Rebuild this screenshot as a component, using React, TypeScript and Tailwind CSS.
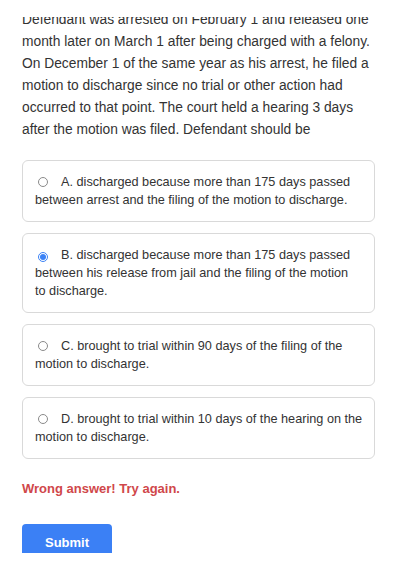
import { useState } from "react";

const options = [
	{ key: "A", lines: ["discharged because more than 175 days passed", "between arrest and the filing of the motion to discharge."] },
	{
		key: "B",
		lines: [
			"discharged because more than 175 days passed",
			"between his release from jail and the filing of the motion",
			"to discharge.",
		],
	},
	{ key: "C", lines: ["brought to trial within 90 days of the filing of the", "motion to discharge."] },
	{ key: "D", lines: ["brought to trial within 10 days of the hearing on the", "motion to discharge."] },
];

const question = [
	"Defendant was arrested on February 1 and released one",
	"month later on March 1 after being charged with a felony.",
	"On December 1 of the same year as his arrest, he filed a",
	"motion to discharge since no trial or other action had",
	"occurred to that point. The court held a hearing 3 days",
	"after the motion was filed. Defendant should be",
];

function Radio({ on }: { on: boolean }) {
	if (on) {
		return (
			<span className="inline-flex items-center justify-center w-[10px] h-[10px] rounded-full border border-[#3b82f6] ml-[3px] mr-[13px] align-[-1px]">
				<span className="w-[6px] h-[6px] rounded-full bg-[#3b82f6]" />
			</span>
		);
	}
	return <span className="inline-block w-[10px] h-[10px] rounded-full border border-[#8a8a8a] ml-[3px] mr-[13px] align-[-1px]" />;
}

export default function App() {
	const [picked, setPicked] = useState("B");

	return (
		<div className="relative min-h-[573px] bg-white text-[#333] font-['Liberation_Sans',Arial,sans-serif]">
			{/* page is scrolled under a white header strip */}
			<div className="fixed top-0 left-0 right-0 h-[17px] bg-white z-10" />

			<div className="px-[22px] pt-[9px]">
				<p className="text-[13.8px] leading-[22px] whitespace-nowrap">
					{question.map((line, i) => (
						<span key={i} className="block">
							{line}
						</span>
					))}
				</p>

				<div className="mt-[19px] flex flex-col gap-[11px]">
					{options.map((o) => (
						<div
							key={o.key}
							onClick={() => setPicked(o.key)}
							className="border border-[#d9d9d9] rounded-[6px] px-[12px] py-[12px] text-[12.7px] leading-[18px] whitespace-nowrap cursor-pointer"
						>
							{o.lines.map((line, i) => (
								<span key={i} className="block">
									{i === 0 && <Radio on={picked === o.key} />}
									{i === 0 ? `${o.key}. ${line}` : line}
								</span>
							))}
						</div>
					))}
				</div>

				<p className="mt-[21px] text-[13px] leading-[18px] font-bold text-[#d0474a]">Wrong answer! Try again.</p>

				<button className="mt-[26px] w-[90px] h-[38px] rounded-[4px] bg-[#3b80f5] text-white text-[13px] font-bold">
					Submit
				</button>
			</div>

			<div className="fixed bottom-0 left-0 right-0 h-[20px] bg-white z-10" />
		</div>
	);
}
